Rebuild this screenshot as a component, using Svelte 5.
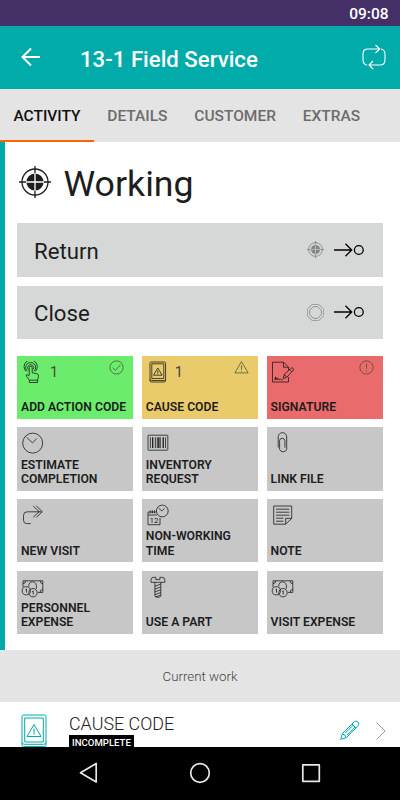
<script>
  const tabs = ['Activity', 'Details', 'Customer', 'Extras']
  let active = $state('Activity')

  const transitions = [
    { label: 'Return', icon: 'target' },
    { label: 'Close', icon: 'octagon' }
  ]

  const tiles = [
    { label: 'Add action code', icon: 'touch', count: 1, status: 'done' },
    { label: 'Cause code', icon: 'cause', count: 1, status: 'warning' },
    { label: 'Signature', icon: 'signature', status: 'required' },
    { label: 'Estimate completion', icon: 'clock' },
    { label: 'Inventory request', icon: 'barcode' },
    { label: 'Link file', icon: 'clip' },
    { label: 'New visit', icon: 'forward' },
    { label: 'Non-working time', icon: 'calendar' },
    { label: 'Note', icon: 'note' },
    { label: 'Personnel expense', icon: 'money' },
    { label: 'Use a part', icon: 'bolt' },
    { label: 'Visit expense', icon: 'money' }
  ]
</script>

{#snippet target()}
  <circle cx="16" cy="16" r="13" />
  <circle cx="16" cy="16" r="8.6" fill="currentColor" stroke="none" />
  <path d="M16 0v8M16 24v8M0 16h8M24 16h8" />
  <path class="cut" d="M16 7v18M7 16h18" />
{/snippet}

{#snippet tileIcon(name)}
  <svg class="tile-icon" viewBox="0 0 24 24" aria-hidden="true">
    {#if name === 'touch'}
      <path d="M8.2 14.5V6.7a1.5 1.5 0 0 1 3 0v5l4.6 1q2 .5 1.7 2.5l-1 4H8.4l-3-4q-.8-1.5.7-1.700l2.100 1.600M8.400 19.200v2.300h8.200v-2.300" />
      <path d="M7.300 8.500a3 3 0 1 1 4.800 0M6.300 10.200a5 5 0 1 1 6.800 0M4.900 10.200a6.600 6.600 0 1 1 9.600 0" />
    {:else if name === 'cause'}
      <rect x="4" y="1" width="15.6" height="20" rx="1.4" />
      <path d="M5.8 2.8h12v14.7h-12zM4 18.2q0 1.3 1.5 1.3h12.6q1.5 0 1.5-1.3" />
      <path d="M11.8 7l4.3 7.2H7.5zM11.8 9.5v3.3" />
    {:else if name === 'signature'}
      <path d="M17.5 16v5h-16V1.2h11l5 5V9M12.5 1.2v5h5" />
      <path d="M12.2 17.5l1.2-4.3 7.4-6.5q1.8.6 1.8 2.1l-6.9 7.6-3.5 1.1M13.4 13.2l2.3 3.2M18.8 8.5l2.1 2.1" />
      <path d="M3.8 18.8l.8-3v3l1.5-2v2l1.2-1.2.8 1.2 1.3-1 .8 1h1.6" />
    {:else if name === 'clock'}
      <circle cx="11.7" cy="11.1" r="10" />
      <path d="M5.7 5.4l5.8 5.4 4.3-4.3" />
    {:else if name === 'barcode'}
      <rect x="2" y="3.2" width="19.8" height="15" rx=".6" />
      <path d="M4.4 5.3v10.8M9.4 5.3v10.8M11.3 5.3v10.8M14.3 5.3v10.8M19.5 5.3v10.8" />
      <path class="heavy" d="M6.7 5.3v10.8M12.8 5.3v10.8M17.2 5.3v10.8" />
    {:else if name === 'clip'}
      <path d="M7.2 15.5V4.9a4.2 4.2 0 0 1 8.5 0v12.5a3.8 3.8 0 0 1-7.1 0V8.2a2.8 2.8 0 0 1 5.3 0v7.5" />
    {:else if name === 'forward'}
      <path d="M9.8 19.6H5.8q-3.3 0-3.3-3.3v-4.8q0-3.7 3.7-3.7h14.4M12.2 2l6 5.7-6 5.6M15.4 2l6 5.7-6 5.6" />
    {:else if name === 'calendar'}
      <circle cx="16.3" cy="7" r="5.9" />
      <path d="M12.9 4.4l3 2.6 2.7-2.7M2 20.7V8h8.2M2 20.7h12v-6.8M2 11h8.8M4.3 6.3v3M6.4 6.3v3M8.5 6.3v3" />
      <text x="3.5" y="19">12</text>
    {:else if name === 'note'}
      <path d="M14.7 20.2H2.7V2h18v12.4zM14.7 20.2v-5.8h6M5 5.2h13.4M5 8.2h13.4M5 11.2h13.4M5 14.2h7.5M5 17.2h7.5" />
    {:else if name === 'money'}
      <path d="M2 11V4.8h19.8v11.6h-5M2 7.7q2.7 0 2.7-2.9M21.8 7.7q-2.7 0-2.7-2.9M21.8 13.5q-2.7 0-2.7 2.9M7.8 10.500q-.300-4.700 4-4.700 4.400.4 3.500 7" />
      <circle cx="5.3" cy="14.8" r="4.1" />
      <circle cx="12" cy="16.7" r="4.2" />
      <path d="M4.5 13.8l1-.8v3.6M11.2 15.7l1-.8v3.6" />
    {:else if name === 'bolt'}
      <path d="M5 6.3V3.8q0-2.5 3-2.5h1.8v2.3h4.1V1.3h1.9q3 0 3 2.5v2.5zM8.9 6.3v13.6l1.2 1.3h3.5l1.2-1.3V6.3M8.9 10.3l5.9-2.2M8.9 13.1l5.9-2.2M8.9 15.9l5.9-2.2M8.9 18.7l5.9-2.2M9.6 20.9l5.2-1.8" />
    {/if}
  </svg>
{/snippet}

<div class="screen">
  <div class="status-bar">09:08</div>

  <header>
    <button class="back" aria-label="Back">
      <svg viewBox="0 0 20 20" aria-hidden="true"><path d="M19 10H2M10 1.5L1.5 10l8.5 8.5" /></svg>
    </button>
    <h1>13-1 Field Service</h1>
    <button class="sync" aria-label="Sync">
      <svg viewBox="0 0 24 26" aria-hidden="true">
        <path d="M5 21.3Q1 20 1 16v-6q0-5 5-5h11.500M13.500 1l4.200 4-4.200 4M19 5q4 1 4 5v6q0 5-5 5H7M11 17l-4 4 4 4" />
      </svg>
    </button>
  </header>

  <nav class="tabs">
    {#each tabs as tab}
      <button class:active={tab === active} onclick={() => (active = tab)}>{tab}</button>
    {/each}
  </nav>

  <main>
    <section class="activity">
      <div class="state">
        <svg viewBox="0 0 32 32" aria-hidden="true">{@render target()}</svg>
        <h2>Working</h2>
      </div>

      {#each transitions as t}
        <button class="transition">
          <span>{t.label}</span>
          <svg class="kind" viewBox="0 0 32 32" aria-hidden="true">
            {#if t.icon === 'target'}
              {@render target()}
            {:else}
              <path d="M10 .5h12l9.500 9.500v12L22 31.500H10L.5 22V10z" />
              <path d="M12 5h8l7 7v8l-7 7h-8l-7-7v-8z" />
            {/if}
          </svg>
          <svg class="go" viewBox="0 0 30 14" aria-hidden="true">
            <path d="M0 7h17.500M11.500 .8L17.700 7l-6.200 6.200" />
            <circle cx="24.800" cy="7" r="4.400" />
          </svg>
        </button>
      {/each}

      <div class="grid">
        {#each tiles as tile}
          <button class="tile {tile.status ?? ''}">
            <div class="tile-top">
              {@render tileIcon(tile.icon)}
              {#if tile.count}<span class="count">{tile.count}</span>{/if}
              {#if tile.status}
                <svg class="flag" viewBox="0 0 15 15" aria-hidden="true">
                  {#if tile.status === 'done'}
                    <circle cx="7.5" cy="7.5" r="6.6" />
                    <path d="M3.7 7.8l2.7 2.5 5-5.3" />
                  {:else if tile.status === 'warning'}
                    <path d="M7.5 1.500l6.600 11.400H.9zM7.500 5.300v4.500M7.500 10.800v.9" />
                  {:else}
                    <circle cx="7.5" cy="7.5" r="6.6" />
                    <path d="M7.5 3.5v5.3M7.5 10.3v1.2" />
                  {/if}
                </svg>
              {/if}
            </div>
            <span class="label">{tile.label}</span>
          </button>
        {/each}
      </div>
    </section>

    <h3>Current work</h3>

    <div class="work">
      <svg class="work-icon" viewBox="0 0 26 34" aria-hidden="true">
        <rect x="1" y="1" width="24" height="31.5" rx="1.5" />
        <path d="M3.7 4h18.6v24H3.7zM1 28.5q0 1.800 2.500 1.800h19q2.500 0 2.500-1.800" />
        <path d="M13 10.500l7 12H6zM13 14.500v6" />
      </svg>
      <div class="work-text">
        <span class="work-title">Cause code</span>
        <span class="badge">Incomplete</span>
      </div>
      <svg class="pencil" viewBox="0 0 20 20" aria-hidden="true">
        <path d="M.7 19.300l1.500-5.500L14.500 1.500q1.500-1.200 3.300.4 1.900 1.900.5 3.600L6.200 17.800zM2.200 13.800q3.300.6 4 4M12 4l4 4M5 13.200l8-7.800M7 15l8-7.800" />
      </svg>
      <svg class="chevron" viewBox="0 0 10 18" aria-hidden="true"><path d="M.5 .5L9 9 .5 17.500" /></svg>
    </div>
  </main>

  <footer>
    <svg viewBox="0 0 22 22" aria-hidden="true"><path d="M18.200 1.500v18.500L2.500 10.800z" /></svg>
    <svg viewBox="0 0 22 22" aria-hidden="true"><circle cx="11" cy="11" r="9.300" /></svg>
    <svg viewBox="0 0 22 22" aria-hidden="true"><rect x="2.800" y="2.800" width="16.500" height="16.500" /></svg>
  </footer>
</div>

<style>
  :global(body) { background: #000; overflow: hidden; }
  .screen {
    width: 400px;
    height: 800px;
    display: flex;
    flex-direction: column;
    overflow: hidden;
    background: #fff;
    color: #1d1d1d;
    font-family: Roboto, sans-serif;
  }
  h1, h2, h3 { margin: 0; }
  button {
    border: 0;
    padding: 0;
    background: none;
    color: inherit;
    font-family: inherit;
    text-align: left;
  }
  svg {
    display: block;
    flex: none;
    fill: none;
    stroke: currentColor;
  }

  .status-bar {
    flex: none;
    height: 26px;
    padding-right: 11.5px;
    background: #442f66;
    color: #fff;
    font-size: 15.5px;
    font-weight: 500;
    line-height: 29px;
    text-align: right;
  }
  header {
    flex: none;
    height: 62.7px;
    display: flex;
    align-items: center;
    padding: 0 14px 0 21px;
    background: #00abaa;
    color: #fff;
  }
  .back svg { width: 20px; height: 20px; stroke-width: 2; }
  h1 {
    flex: 1;
    margin: 4px 0 0 39px;
    font-size: 22.2px;
    font-weight: 500;
    line-height: 28px;
  }
  .sync svg { width: 24px; height: 26px; stroke-width: 1.1; }

  .tabs {
    flex: none;
    height: 53.3px;
    display: flex;
    background: #e4e4e4;
  }
  .tabs button {
    padding: 4px 13.4px 0;
    border-bottom: 2px solid transparent;
    color: #6c6c6c;
    font-size: 15.5px;
    font-weight: 500;
    text-transform: uppercase;
  }
  .tabs .active { color: #111; border-color: #f96600; }

  main { flex: 1; min-height: 0; overflow: hidden; }
  .activity {
    height: 508.5px;
    box-sizing: border-box;
    padding: 16px 17px 0 12px;
    border-left: 5px solid #00abaa;
  }
  .state { display: flex; align-items: center; height: 65.3px; }
  .state svg {
    width: 32px;
    height: 32px;
    margin: 0 12.5px 17px 2px;
    stroke-width: 1.3;
  }
  .cut { stroke: #fff; }
  h2 {
    margin-bottom: 13px;
    font-size: 35.7px;
    font-weight: 400;
    line-height: 42px;
  }
  .transition {
    width: 100%;
    height: 53.3px;
    display: flex;
    align-items: center;
    margin-bottom: 9px;
    padding: 0 19px 0 17px;
    background: #d6d8d7;
    font-size: 22.2px;
  }
  .transition span { flex: 1; padding-top: 2px; }
  .kind {
    width: 17px;
    height: 17px;
    margin: 0 10px 0 0;
    color: #858585;
    stroke-width: 1.6;
  }
  .kind .cut { stroke: #d6d8d7; stroke-width: 1.1; }
  .go {
    width: 30px;
    height: 14px;
    color: #000;
    stroke-width: 1.3;
  }

  .grid {
    display: grid;
    grid-template-columns: repeat(3, 1fr);
    grid-auto-rows: 63.3px;
    gap: 8.4px;
    margin-top: 16.7px;
  }
  .tile {
    display: flex;
    flex-direction: column;
    justify-content: space-between;
    padding: 5px 4px 4px;
    background: #c7c7c7;
  }
  .tile-top { align-self: stretch; display: flex; height: 24px; }
  .tile-icon { width: 24px; height: 24px; stroke-width: .8; }
  .tile-icon text {
    fill: currentColor;
    stroke: none;
    font-size: 8px;
  }
  .heavy { stroke-width: 1.3; }
  .count {
    margin-left: 5px;
    color: #444;
    font-size: 14.5px;
    line-height: 23.5px;
  }
  .flag {
    width: 15px;
    height: 15px;
    margin: -1px 5px 0 auto;
    color: #3e4a3a;
    stroke-width: .7;
  }
  .label {
    max-width: 110px;
    font-size: 12.2px;
    font-weight: 600;
    line-height: 14.5px;
    text-transform: uppercase;
  }
  .done { background: #6bec6c; }
  .warning { background: #e9cb6c; }
  .required { background: #ea6b6b; }

  h3 {
    height: 51.5px;
    background: #e4e4e4;
    color: #444;
    font-size: 13.3px;
    font-weight: 300;
    line-height: 54px;
    text-align: center;
  }
  .work {
    display: flex;
    align-items: flex-start;
    height: 45px;
    box-sizing: border-box;
    padding: 11px 14px 0 21px;
  }
  .work-icon { width: 26px; height: 34px; margin-top: 1px; color: #00abaa; }
  .work-text {
    flex: 1;
    display: flex;
    flex-direction: column;
    align-items: flex-start;
    margin-left: 22px;
  }
  .work-title {
    color: #222;
    font-size: 17.9px;
    font-weight: 300;
    line-height: 22px;
    text-transform: uppercase;
  }
  .badge {
    padding: 3px 3px 0;
    background: #000;
    color: #fff;
    font-size: 9.6px;
    font-weight: 500;
    line-height: 10px;
    text-transform: uppercase;
  }
  .pencil { width: 20px; height: 20px; margin-top: 7px; color: #00abaa; }
  .chevron { width: 10px; height: 18px; margin: 9px 0 0 16px; color: #999; }

  footer {
    flex: none;
    height: 53.3px;
    display: flex;
    align-items: center;
    justify-content: center;
    gap: 89px;
    background: #000;
    color: #e8e8e8;
  }
  footer svg { width: 22px; height: 22px; stroke-width: 1.7; stroke-linejoin: round; }
</style>
